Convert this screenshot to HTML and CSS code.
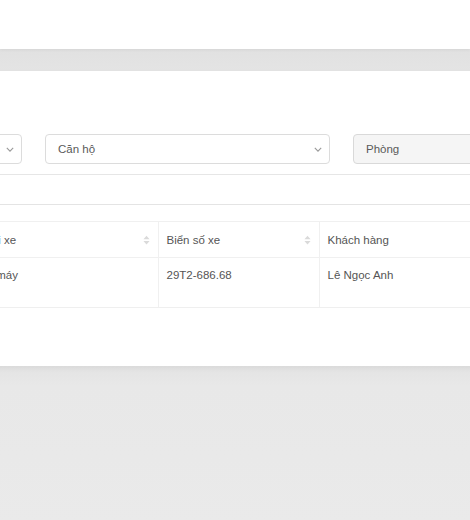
FILE: index.html
```html
<!DOCTYPE html>
<html lang="vi">
<head>
<meta charset="utf-8">
<title>Danh sách xe</title>
<link rel="stylesheet" href="styles.css">
</head>
<body>
<header class="topbar"></header>
<main class="content">
  <section class="card">
    <div class="filters">
      <div class="select">
        <span class="select-text"></span>
        <svg class="chevron" viewBox="0 0 10 6" width="8" height="5"><path d="M1 1l4 4 4-4" fill="none" stroke="#999" stroke-width="1.4"/></svg>
      </div>
      <div class="select">
        <span class="select-text">Căn hộ</span>
        <svg class="chevron" viewBox="0 0 10 6" width="8" height="5"><path d="M1 1l4 4 4-4" fill="none" stroke="#999" stroke-width="1.4"/></svg>
      </div>
      <div class="input disabled">
        <span class="select-text">Phòng</span>
      </div>
    </div>
    <div class="divider"></div>
    <div class="toolbar"></div>
    <div class="table-wrap">
      <table class="table">
        <colgroup>
          <col class="c1"><col class="c2"><col class="c3">
        </colgroup>
        <thead>
          <tr>
            <th><div class="th-inner"><span>Loại xe</span><svg class="sorter" viewBox="0 0 8 11" width="7" height="10"><path d="M4 0.5L7.5 4.5H0.5Z M4 10.5L0.5 6.5H7.5Z" fill="#dadada"/></svg></div></th>
            <th><div class="th-inner"><span>Biển số xe</span><svg class="sorter" viewBox="0 0 8 11" width="7" height="10"><path d="M4 0.5L7.5 4.5H0.5Z M4 10.5L0.5 6.5H7.5Z" fill="#dadada"/></svg></div></th>
            <th><div class="th-inner"><span>Khách hàng</span></div></th>
          </tr>
        </thead>
        <tbody>
          <tr>
            <td>Xe máy</td>
            <td>29T2-686.68</td>
            <td>Lê Ngọc Anh</td>
          </tr>
        </tbody>
      </table>
    </div>
  </section>
</main>
<div class="below"></div>
</body>
</html>
```

FILE: styles.css
```css
html, body {
  margin: 0;
  padding: 0;
}
body {
  background: #e9e9e9;
  font-family: "Liberation Sans", Arial, Helvetica, sans-serif;
  font-size: 11.5px;
  color: #555;
  overflow: hidden;
  width: 470px;
  height: 520px;
}
.topbar {
  height: 49px;
  background: #fff;
  box-shadow: 0 1px 3px rgba(0,0,0,0.06);
  position: relative;
  z-index: 2;
}
.content {
  padding-top: 22px;
  background: linear-gradient(#e1e1e1, #e4e4e4 22px, #e9e9e9 100%);
}
.card {
  background: #fff;
  height: 295px;
  width: 1200px;
  margin-left: -300px;
  padding: 63px 0 0 37px;
  box-sizing: border-box;
  box-shadow: 0 2px 6px rgba(0,0,0,0.05);
  position: relative;
  z-index: 1;
}
.below {
  height: 160px;
  background: linear-gradient(#e3e3e3, #e8e8e8 20px, #eaeaea 100%);
}
.filters {
  display: grid;
  grid-template-columns: 285px 285px 285px;
  column-gap: 23px;
}
.select, .input {
  height: 30px;
  box-sizing: border-box;
  border: 1px solid #dcdcdc;
  border-radius: 4px;
  background: #fff;
  display: flex;
  align-items: center;
  justify-content: space-between;
  padding: 0 7px 0 12px;
}
.input.disabled {
  background: #f5f5f5;
  border-color: #d9d9d9;
}
.select-text {
  color: #5a5a5a;
  font-size: 11.5px;
}
.chevron {
  display: block;
}
.divider {
  margin-top: 10px;
  margin-left: -37px;
  height: 1px;
  background: #e6e6e6;
}
.toolbar {
  height: 29px;
  margin-left: -37px;
  border-bottom: 1px solid #e4e4e4;
}
.table-wrap {
  margin-top: 16px;
  margin-left: 234px;
}
.table {
  border-collapse: collapse;
  width: 800px;
  table-layout: fixed;
}
.c1 { width: 187px; }
.c2 { width: 161px; }
.c3 { width: 452px; }
.table th, .table td {
  border-right: 1px solid #f0f0f0;
  text-align: left;
  font-weight: normal;
  color: #555;
  font-size: 11.5px;
}
.table thead th {
  border-top: 1px solid #f0f0f0;
  border-bottom: 1px solid #f0f0f0;
  height: 34px;
  padding: 1px 8px 0 8px;
}
.th-inner {
  display: flex;
  align-items: center;
  justify-content: space-between;
}
.sorter {
  display: block;
}
.table td {
  height: 50px;
  box-sizing: border-box;
  vertical-align: top;
  padding: 11px 8px 0 8px;
  border-bottom: 1px solid #efefef;
}
```
